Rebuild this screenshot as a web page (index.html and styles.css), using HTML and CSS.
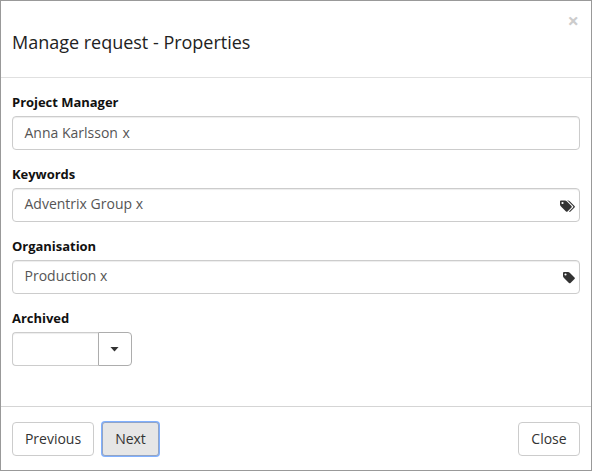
FILE: index.html
```html
<!DOCTYPE html>
<html lang="en">
<head>
<meta charset="utf-8">
<title>Manage request</title>
<link rel="stylesheet" href="styles.css">
</head>
<body>
<div class="modal">
  <header class="modal-header">
    <h1 class="title">Manage request - Properties</h1>
    <button class="dismiss" aria-label="Close">×</button>
  </header>
  <main class="modal-body">
    <div class="field">
      <div class="label">Project Manager</div>
      <div class="input person"><span>Anna Karlsson <span class="remove">x</span></span></div>
    </div>
    <div class="field">
      <div class="label">Keywords</div>
      <div class="input">Adventrix Group x
        <svg class="tags" viewBox="0 0 15 12" width="15" height="13"><path fill-rule="evenodd" d="M0 1Q0 0 1 0H5Q6 0 7 1L11.500 5.500Q12.200 6.200 11.500 7L7.500 11Q6.800 11.700 6 11L1 6Q0 5 0 4ZM2.500 1.400a1.100 1.100 0 1 0 0 2.200a1.100 1.100 0 1 0 0-2.200Z"/><path d="M7 0H8Q9 0 10 1L14.500 5.500Q15.200 6.200 14.500 7L10.500 11Q9.700 11.800 9 11L13 6.900Q13.600 6.200 13 5.500L8.500 1Q8 .5 7 0Z"/></svg>
      </div>
    </div>
    <div class="field">
      <div class="label">Organisation</div>
      <div class="input">Production x
        <svg class="tags" viewBox="0 0 12 12" width="12" height="12"><path fill-rule="evenodd" d="M0 1Q0 0 1 0H5Q6 0 7 1L11.500 5.500Q12.200 6.200 11.500 7L7.500 11Q6.800 11.700 6 11L1 6Q0 5 0 4ZM2.500 1.400a1.100 1.100 0 1 0 0 2.200a1.100 1.100 0 1 0 0-2.200Z"/></svg>
      </div>
    </div>
    <div class="field">
      <div class="label">Archived</div>
      <div class="select"><span class="value"></span><button class="toggle" aria-label="Options"><span class="caret"></span></button></div>
    </div>
  </main>
  <footer class="modal-footer">
    <button class="btn previous">Previous</button>
    <button class="btn next">Next</button>
    <button class="btn close">Close</button>
  </footer>
</div>
</body>
</html>
```
FILE: styles.css
```css
* { box-sizing: border-box; }
body { margin: 0; font: 14px/20px "Open Sans", sans-serif; color: #222; }
.modal { width: 592px; height: 471px; border: 1px solid #999; display: flex; flex-direction: column; background: #fff; }
.modal-header { height: 77px; border-bottom: 1px solid #e0e0e0; display: flex; justify-content: space-between; padding: 10px 11px 0; }
.title { margin: 19px 0 0; font-size: 18px; line-height: 25px; font-weight: 400; letter-spacing: -.01px; }
.dismiss { border: 0; padding: 0 1px 0 0; background: none; font: 700 20px/20px "Open Sans", sans-serif; height: 20px; color: #ccc; }
.modal-body { flex: 1; padding: 14px 11px 0; }
.field { height: 72px; }
.label { font-size: 13px; font-weight: 700; line-height: 20px; height: 24px; letter-spacing: -.03px; color: #111; }
.input { height: 34px; border: 1px solid #ccc; border-radius: 4px; box-shadow: inset 0 1px 1px rgba(0,0,0,.075); padding: 5px 4px 0 11.500px; display: flex; justify-content: space-between; color: #555; }
.person { padding-top: 6px; }
.remove { margin-left: 1px; }
.tags { fill: #333; margin-top: 6px; }
.select { display: flex; width: 120px; height: 34px; }
.value { width: 86px; border: 1px solid #ccc; border-right: 0; border-radius: 4px 0 0 4px; box-shadow: inset 0 1px 1px rgba(0,0,0,.075); }
.toggle { width: 34px; padding: 0 1px 0 0; border: 1px solid #adadad; border-radius: 0 4px 4px 0; background: #fff; display: flex; align-items: center; justify-content: center; }
.caret { width: 9px; height: 5px; background: #333; clip-path: polygon(0 0, 100% 0, 50% 100%); }
.modal-footer { height: 64px; border-top: 1px solid #d5d5d5; padding: 15px 11px; display: flex; gap: 8px; }
.btn { height: 34px; border: 1px solid #ccc; border-radius: 4px; background: #fff; color: #333; font: 14px/20px "Open Sans", sans-serif; padding: 0; }
.previous { width: 82px; }
.next { width: 57px; background: #e6e6e6; border-color: #91a4c5; box-shadow: 0 0 0 1px #80b0ff; border-radius: 3px; }
.close { width: 62px; margin-left: auto; }
```
